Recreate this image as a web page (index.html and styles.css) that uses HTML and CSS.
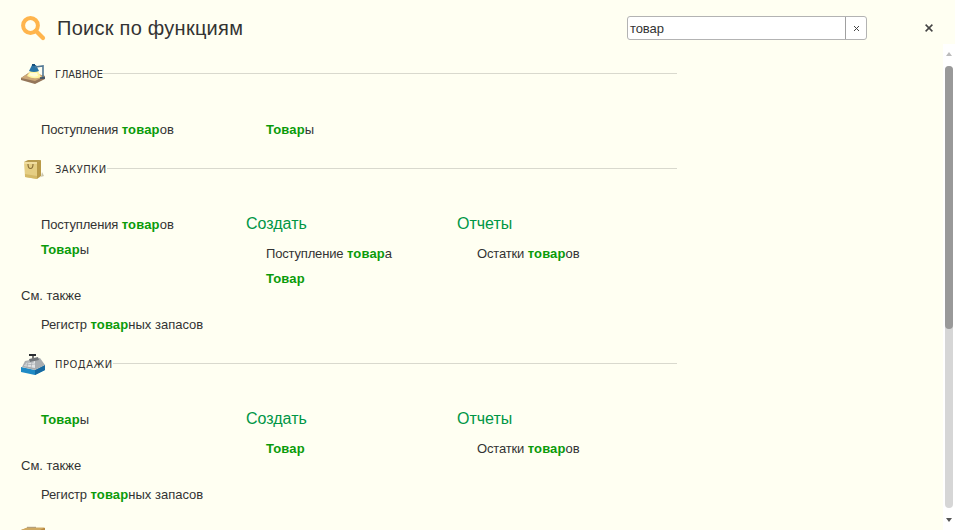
FILE: index.html
```html
<!DOCTYPE html>
<html lang="ru">
<head>
<meta charset="utf-8">
<title>Поиск по функциям</title>
<link rel="stylesheet" href="styles.css">
</head>
<body>
<header class="top">
  <svg class="search-icon" width="26" height="26" viewBox="0 0 26 26"><circle cx="9.5" cy="9.5" r="7.4" fill="none" stroke="#ffb54d" stroke-width="4"/><path d="M15 15L22 22" stroke="#ffb54d" stroke-width="4.2" stroke-linecap="round"/></svg>
  <h1>Поиск по функциям</h1>
  <div class="field"><span class="value">товар</span><span class="clear"><svg width="5" height="5" viewBox="0 0 5 5"><path d="M0 0L5 5M5 0L0 5" stroke="#444" stroke-width="1"/></svg></span></div>
  <svg class="close" width="8" height="8" viewBox="0 0 8 8"><path d="M.6 .6L7.4 7.4M7.4 .6L.6 7.4" stroke="#444" stroke-width="1.5"/></svg>
</header>
<div class="body">
<main>
  <section>
    <div class="head">
      <svg width="26" height="22" viewBox="0 0 26 22"><path d="M0 15L9 9L24 13L24 16L14 21L0 17Z" fill="#94765a"/><path d="M0 15L9 9L24 13L14 18Z" fill="#cda878"/><path d="M9 8H17L20 14Q13 17 6 13Z" fill="#fff4a0"/><path d="M9 10H16L17 13Q12 15 8 12Z" fill="#fffbd8"/><path d="M8 8L11 2H15L18 8Q13 10 8 8Z" fill="#2874a6"/><path d="M11 1H14V3H11Z" fill="#174f7a"/><path d="M14 4L22 3V15" fill="none" stroke="#527894" stroke-width="1.6"/><path d="M19 15H24" stroke="#334c66" stroke-width="1.5"/></svg>
      <h2 class="w48">ГЛАВНОЕ</h2><i></i>
    </div>
    <div class="cols">
      <ul><li><span>Поступления</span> <b>товар</b>ов</li></ul>
      <ul><li><b>Товар</b>ы</li></ul>
    </div>
  </section>
  <section>
    <div class="head">
      <svg width="26" height="22" viewBox="0 0 26 22"><path d="M16 20L23 18L21 14L20 19Z" fill="#c9c4ab"/><path d="M3 4L7 2H20L17 4Z" fill="#b79b4e"/><path d="M3 4H16V21L4 19Z" fill="#e5ce83"/><path d="M16 4L20 2V18L16 21Z" fill="#b99a48"/><path d="M3 4H16V6H3Z" fill="#f0dda0"/><path d="M4 16L16 18V21L4 19Z" fill="#d4b967"/><path d="M7 6C7 12 12 12 12 6" fill="none" stroke="#8b713a" stroke-width="1.2"/></svg>
      <h2 class="w52">ЗАКУПКИ</h2><i></i>
    </div>
    <div class="cols">
      <div>
        <ul><li><span>Поступления</span> <b>товар</b>ов</li><li><b>Товар</b>ы</li></ul>
        <h4>См. также</h4>
        <ul><li><span>Регистр</span> <b>товар</b>ных запасов</li></ul>
      </div>
      <div><h3>Создать</h3><ul><li><span>Поступление</span> <b>товар</b>а</li><li><b>Товар</b></li></ul></div>
      <div><h3>Отчеты</h3><ul><li><span>Остатки</span> <b>товар</b>ов</li></ul></div>
    </div>
  </section>
  <section>
    <div class="head">
      <svg width="26" height="22" viewBox="0 0 26 22"><path d="M0 14L14 17L24 12V17L14 22L0 19Z" fill="#1f8ac5"/><path d="M14 17L24 12V17L14 22Z" fill="#1769a0"/><path d="M1 14L4 8L19 5L24 12L14 17Z" fill="#a9adb0"/><path d="M3 13L6 9L14 8L14 15Z" fill="#e2e4e5"/><path d="M5 10L13 9M4 12L14 11M7 9L6 14M11 9L10 15" stroke="#a5a9ad" stroke-width=".7"/><path d="M8 6L17 4L18 7L9 9Z" fill="#72777b"/><path d="M11 2H13V6H11Z" fill="#777"/><path d="M8 1H15V3H8Z" fill="#292d30"/></svg>
      <h2 class="w58">ПРОДАЖИ</h2><i></i>
    </div>
    <div class="cols">
      <div>
        <ul><li><b>Товар</b>ы</li></ul>
        <h4>См. также</h4>
        <ul><li><span>Регистр</span> <b>товар</b>ных запасов</li></ul>
      </div>
      <div><h3>Создать</h3><ul><li><b>Товар</b></li></ul></div>
      <div><h3>Отчеты</h3><ul><li><span>Остатки</span> <b>товар</b>ов</li></ul></div>
    </div>
  </section>
  <section>
    <div class="head">
      <svg width="26" height="22" viewBox="0 0 26 22"><path d="M0 7L6 5H24V19H0Z" fill="#b98a42"/><path d="M0 7L6 4.5H24L19 7Z" fill="#cfa962"/><path d="M6 4.3H15" stroke="#8e7755" stroke-width=".7"/></svg>
    </div>
  </section>
</main>
<aside class="scroll"><span class="up"></span><span class="track"><span class="thumb"></span></span><span class="down"></span></aside>
</div>
</body>
</html>
```
FILE: styles.css
```css
* { box-sizing: border-box; }
html, body { height: 530px; overflow: hidden; }
body { margin: 0; background: #fffff2; color: #333; font: 13px/25px "Liberation Sans", Arial, sans-serif; }
h1, h2, h3, h4, ul { margin: 0; padding: 0; font-weight: normal; list-style: none; }
.top { height: 44px; display: flex; align-items: flex-start; padding: 16px 21px 0 21px; }
.search-icon { flex: none; margin-right: 10px; }
h1 { width: 570px; font-size: 20px; line-height: 24px; letter-spacing: .26px; white-space: nowrap; }
.field { width: 240px; height: 24px; display: flex; background: #fff; border: 1px solid #b3b3b3; border-radius: 3px; }
.value { flex: 1; padding-left: 2px; line-height: 23px; letter-spacing: -.1px; }
.clear { width: 21px; border-left: 1px solid #a0a0a0; display: flex; align-items: center; justify-content: center; }
.close { margin: 8px 0 0 58px; }
.body { height: 486px; display: flex; overflow: hidden; }
main { flex: 1; padding: 14px 0 0 21px; }
section { padding-bottom: 11px; }
.head { height: 32px; width: 656px; display: flex; align-items: center; margin-bottom: 27px; }
.head svg { flex: none; margin-right: 8px; }
h2 { flex: none; padding-top: 1px; font: 11px/14px "DejaVu Sans Condensed", "DejaVu Sans", sans-serif; font-stretch: condensed; white-space: nowrap; }
.w48 { width: 48px; letter-spacing: -.1px; }
.w52 { width: 52px; letter-spacing: .5px; }
.w58 { width: 58px; letter-spacing: .55px; }
.head i { flex: 1; height: 1px; background: #d9d9ce; margin-bottom: 1px; }
.cols { display: grid; grid-template-columns: 225px 211px 220px; }
li { height: 25px; padding-left: 20px; white-space: nowrap; }
li span { letter-spacing: -.17px; }
b { color: #0a9b0a; letter-spacing: .15px; }
h3 { height: 29px; font-size: 16px; line-height: 23px; color: #009646; }
h4 { font-size: 13px; line-height: 25px; margin: 21px 0 4px; }
.scroll { width: 12px; background: #fff; display: flex; flex-direction: column; align-items: center; }
.up, .down { border: 3px solid transparent; height: 4px; border-top: 0; border-bottom: 4px solid #bbb; margin: 8px 0 10px; }
.track { width: 8px; height: 442px; border-radius: 4px; background: #d6d6d6; }
.thumb { display: block; height: 263px; border-radius: 4px; background: #999; }
.down { border-bottom: 0; border-top: 4px solid #555; margin: 10px 0 0; }
```
